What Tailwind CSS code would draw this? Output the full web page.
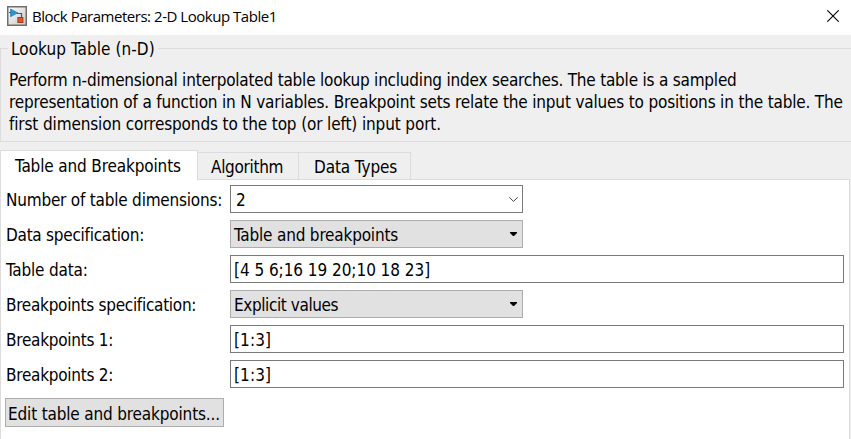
<!DOCTYPE html>
<html lang="en">
<head>
<meta charset="utf-8">
<title>Block Parameters: 2-D Lookup Table1</title>
<script src="https://cdn.jsdelivr.net/npm/@tailwindcss/browser@4"></script>
</head>
<body class="w-[851px] h-[439px] overflow-hidden bg-[#efefef] text-black whitespace-nowrap font-['DejaVu_Sans_Condensed','DejaVu_Sans',sans-serif] [font-stretch:condensed] text-[17px] tracking-[-0.19px]">
<header class="h-[35px] bg-white flex items-center pl-[7px] pr-[12px]">
  <svg class="w-5 h-5 -mt-[3px] shrink-0" viewBox="0 0 20 20">
    <defs><linearGradient id="g" x2="1" y2="1"><stop stop-color="#fff"/><stop offset="1" stop-color="#c6c6c6"/></linearGradient></defs>
    <rect x=".75" y=".75" width="18.5" height="18.5" fill="url(#g)" stroke="#6e6e6e" stroke-width="1.5"/>
    <path d="M2 6.5h2M10 7.5h4.5V12" fill="none" stroke="#555" stroke-width="1.2"/>
    <path d="M3.5 3L10.8 6.8L3.5 10.8Z" fill="#2b93d1" stroke="#1c6fa8" stroke-width=".6"/>
    <rect x="10.9" y="11.5" width="5" height="5" fill="#dd5a28" stroke="#a93a12"/>
  </svg>
  <h1 class="ml-[5px] -mt-[3px] font-['Open_Sans','Noto_Sans',sans-serif] [font-stretch:normal] text-[15px] tracking-[-0.47px]">Block Parameters: 2-D Lookup Table1</h1>
  <svg class="w-[12px] h-[12px] ml-auto -mt-[3px]" viewBox="0 0 12 12"><path d="M.3 .3L11.7 11.7M11.7 .3L.3 11.7" stroke="#000" stroke-width="1.1"/></svg>
</header>
<fieldset class="mt-[1px] h-[106px] border border-[#dcdcdc] border-r-0 pl-2">
  <legend class="px-[3px] -ml-px h-[24px] leading-[26px] tracking-[0.06px]">Lookup Table (n-D)</legend>
  <p class="mt-[9px] leading-[22px] tracking-[-0.21px]">Perform n-dimensional interpolated table lookup including index searches. The table is a sampled<br><span class="tracking-[-0.175px]">representation of a function in N variables. Breakpoint sets relate the input values to positions in the table. The</span><br><span class="tracking-[-0.13px]">first dimension corresponds to the top (or left) input port.</span></p>
</fieldset>
<nav class="mt-[8px] h-[30px] flex items-end relative z-10">
  <div class="w-[198px] h-[30px] bg-white border border-b-0 border-[#dcdcdc] pl-[14px] leading-[31px] tracking-[-0.14px]">Table and Breakpoints</div>
  <div class="w-[101px] h-[28px] border-t border-r border-[#dcdcdc] pl-[13px] leading-[29px] tracking-[-0.3px]">Algorithm</div>
  <div class="w-[112px] h-[28px] border-t border-r border-[#dcdcdc] pl-[15px] leading-[29px] tracking-[-0.1px]">Data Types</div>
</nav>
<main class="-mt-px w-[850px] h-[262px] bg-white border border-b-0 border-[#dcdcdc] pl-[5px] pt-[5px] pr-[5px] grid grid-cols-[224px_1fr] auto-rows-[28px] gap-y-[7px] leading-[28px]">
  <label class="pt-px tracking-[-0.21px]">Number of table dimensions:</label>
  <div class="w-[293px] h-[28px] border border-[#7a7a7a] pl-[5px] pr-[4px] flex items-center justify-between"><span class="pt-px">2</span><svg class="w-[9px] h-[5px] mt-px" viewBox="0 0 9 5"><path d="M.3.3L4.5 4.4L8.7.3" fill="none" stroke="#444" stroke-width="1"/></svg></div>
  <label class="pt-px tracking-[-0.26px]">Data specification:</label>
  <div class="w-[293px] h-[28px] border border-[#adadad] bg-[#e1e1e1] pl-[3px] pr-[5px] flex items-center justify-between"><span class="pt-px">Table and breakpoints</span><svg class="w-[7px] h-[4px]" viewBox="0 0 7 4"><path d="M0 0H7V1L4 4H3L0 1Z"/></svg></div>
  <label class="pt-px">Table data:</label>
  <div class="w-[614px] h-[28px] border border-[#7a7a7a] pl-[3px] tracking-[-0.05px]">[4 5 6;16 19 20;10 18 23]</div>
  <label class="pt-px tracking-[-0.28px]">Breakpoints specification:</label>
  <div class="w-[293px] h-[28px] border border-[#adadad] bg-[#e1e1e1] pl-[3px] pr-[5px] flex items-center justify-between"><span class="pt-px tracking-[-0.4px]">Explicit values</span><svg class="w-[7px] h-[4px]" viewBox="0 0 7 4"><path d="M0 0H7V1L4 4H3L0 1Z"/></svg></div>
  <label class="pt-px tracking-[-0.25px]">Breakpoints 1:</label>
  <div class="w-[614px] h-[28px] border border-[#7a7a7a] pl-[3px] tracking-[0.1px]">[1:3]</div>
  <label class="pt-px tracking-[-0.25px]">Breakpoints 2:</label>
  <div class="w-[614px] h-[28px] border border-[#7a7a7a] pl-[3px] tracking-[0.1px]">[1:3]</div>
  <button class="mt-[3px] -ml-px w-[219px] h-[29px] border border-[#adadad] bg-[#e1e1e1] pl-[2px] pt-px text-left leading-[28px] tracking-[-0.16px]">Edit table and breakpoints...</button>
</main>
</body>
</html>
